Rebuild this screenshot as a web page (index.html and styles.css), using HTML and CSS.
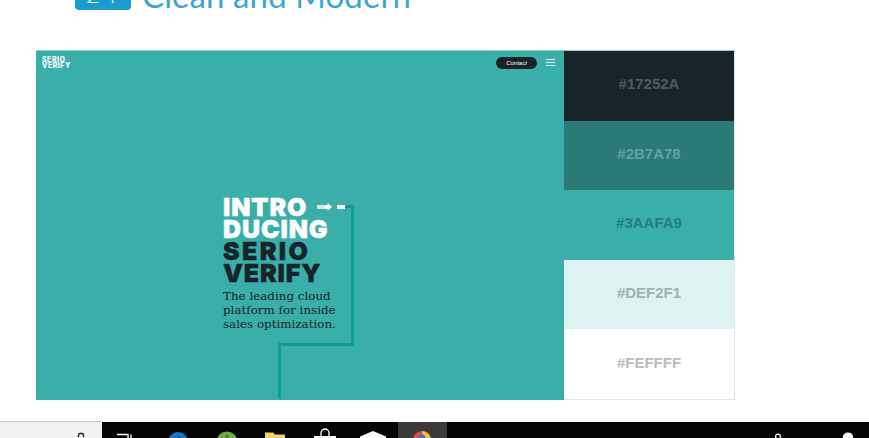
FILE: index.html
```html
<!DOCTYPE html>
<html lang="en">
<head>
  <meta charset="UTF-8">
  <meta name="viewport" content="width=device-width, initial-scale=1">
  <title>Clean and Modern</title>
  <link rel="stylesheet" href="styles.css">
</head>
<body>
<div class="page">
  <h2 class="titulo">
    <span class="badge">24</span>
    <span class="titulo-texto">Clean and Modern</span>
  </h2>

  <div class="figura">
    <div class="hero">
      <div class="hero-top">
        <div class="logo">SERIO<br>VERIFY</div>
        <div class="hero-nav">
          <span class="contact">Contact</span>
          <span class="menu"><i></i><i></i><i></i></span>
        </div>
      </div>
      <div class="hero-body">
        <div class="intro">
          <div class="intro-linha">
            <span class="branco">INTRO</span>
            <svg class="seta" width="30" height="8" viewBox="0 0 30 8">
              <rect x="0" y="2" width="8" height="4" fill="#cfe9e7"/>
              <path d="M8 2h2.500V0L15 4l-4.500 4V6H8z" fill="#fff"/>
              <rect x="20" y="2" width="8" height="4" fill="#fff"/>
            </svg>
          </div>
          <div class="branco">DUCING</div>
          <div class="escuro serio">SERIO</div>
          <div class="escuro">VERIFY</div>
          <p class="sub">The leading cloud<br>platform for inside<br>sales optimization.</p>
        </div>
      </div>
      <svg class="linha" width="82" height="194" viewBox="0 0 82 194">
        <path d="M68 1.500H75.500V139.500H2.500V194" fill="none" stroke="#0f9c96" stroke-width="3"/>
      </svg>
    </div>
    <div class="paleta">
      <div class="cor cor1">#17252A</div>
      <div class="cor cor2">#2B7A78</div>
      <div class="cor cor3">#3AAFA9</div>
      <div class="cor cor4">#DEF2F1</div>
      <div class="cor cor5">#FEFFFF</div>
    </div>
  </div>

  <div class="barra">
    <div class="busca">
      <svg width="8" height="15" viewBox="0 0 8 15">
        <rect x="1.500" y="11.500" width="5" height="8" rx="1.500" fill="none" stroke="#222" stroke-width="1.400"/>
      </svg>
    </div>
    <div class="apps">
      <div class="app">
        <svg width="24" height="16" viewBox="0 0 24 16">
          <path d="M-1 16V12.500H11V16M14 12.500V16" fill="none" stroke="#fff" stroke-width="1.300"/>
        </svg>
      </div>
      <div class="app">
        <svg width="24" height="16" viewBox="0 0 24 16">
          <circle cx="12" cy="20" r="10" fill="#0c78c8"/>
          <circle cx="13" cy="20" r="4.500" fill="#000"/>
        </svg>
      </div>
      <div class="app">
        <svg width="24" height="16" viewBox="0 0 24 16">
          <circle cx="12" cy="20" r="10.500" fill="#76a844"/>
          <circle cx="12" cy="14.500" r="2" fill="#55802f"/>
        </svg>
      </div>
      <div class="app">
        <svg width="24" height="16" viewBox="0 0 24 16">
          <path d="M1 16V10.500H9L11 12.500H21V16z" fill="#f2d16f"/>
        </svg>
      </div>
      <div class="app">
        <svg width="24" height="16" viewBox="0 0 24 16">
          <path d="M8 14V11a4 4 0 0 1 8 0V14" fill="none" stroke="#fff" stroke-width="1.300"/>
          <rect x="1" y="14" width="22" height="2" fill="#fff"/>
        </svg>
      </div>
      <div class="app">
        <svg width="28" height="16" viewBox="0 0 28 16">
          <path d="M13 9L26 14.500V16H0V14.500z" fill="#fff"/>
        </svg>
      </div>
      <div class="app app-ativo">
        <svg width="24" height="16" viewBox="0 0 24 16">
          <path d="M2 16a9 9 0 0 1 9-7V16z" fill="#e8453c"/>
          <path d="M11 9a9 9 0 0 1 9 7H11z" fill="#f6c02c"/>
          <circle cx="11" cy="16" r="3.500" fill="#3d6fd8"/>
        </svg>
      </div>
    </div>
    <div class="bandeja">
      <svg width="10" height="16" viewBox="0 0 10 16">
        <circle cx="5" cy="14.500" r="2.400" fill="none" stroke="#fff" stroke-width="1.200"/>
      </svg>
      <svg width="12" height="16" viewBox="0 0 12 16">
        <path d="M1 16a5 4.500 0 0 1 10-2V16z" fill="#fff"/>
      </svg>
    </div>
  </div>
</div>
</body>
</html>
```

FILE: styles.css
```css
html, body {
  margin: 0;
  padding: 0;
  background: #ffffff;
}
.page {
  height: 438px;
  overflow: hidden;
  display: flex;
  flex-direction: column;
}
.titulo {
  display: flex;
  align-items: flex-end;
  gap: 11px;
  height: 51px;
  margin: -30px 0 29px 0;
  padding-left: 75px;
  font-weight: normal;
  box-sizing: border-box;
}
.badge {
  width: 56px;
  height: 28px;
  margin-bottom: 11px;
  background: #1a9ccf;
  border-radius: 4px;
  color: #ffffff;
  font-family: "Lato", sans-serif;
  font-weight: 300;
  font-size: 24px;
  line-height: 23px;
  text-align: center;
  letter-spacing: 3px;
  overflow: hidden;
}
.titulo-texto {
  color: #3da5d3;
  font-family: "Lato", sans-serif;
  font-weight: 400;
  font-size: 33px;
  line-height: 41px;
  margin-bottom: 5px;
  letter-spacing: 0.1px;
}
.figura {
  display: flex;
  width: 699px;
  height: 349px;
  margin-left: 36px;
  border-top: 1px solid #8fd0cc;
}
.hero {
  position: relative;
  width: 528px;
  background: #3aafa9;
  display: flex;
  flex-direction: column;
}
.hero-top {
  display: flex;
  justify-content: space-between;
  padding: 5px 9px 0 6px;
}
.logo {
  margin-top: 1px;
  color: #ffffff;
  font-family: "Inter", sans-serif;
  font-weight: 800;
  font-size: 7px;
  line-height: 6px;
  letter-spacing: 0.500px;
}
.hero-nav {
  display: flex;
  align-items: center;
  gap: 9px;
}
.contact {
  width: 41px;
  height: 12px;
  border-radius: 6px;
  background: #17252a;
  color: #ffffff;
  font-family: "Liberation Sans", sans-serif;
  font-style: italic;
  font-size: 6px;
  line-height: 12px;
  text-align: center;
}
.menu {
  display: flex;
  flex-direction: column;
  gap: 2px;
  width: 9px;
}
.menu i {
  height: 1px;
  background: #e4f5f4;
}
.hero-body {
  padding: 127px 0 0 187px;
}
.intro {
  font-family: "Inter", sans-serif;
  font-weight: 900;
  font-size: 25px;
  line-height: 22px;
  letter-spacing: 0.9px;
  -webkit-text-stroke: 0.4px currentColor;
}
.intro-linha {
  display: flex;
  align-items: center;
  gap: 10px;
}
.branco {
  color: #ffffff;
}
.escuro {
  color: #17252a;
}
.serio {
  letter-spacing: 2.400px;
}
.seta {
  flex: none;
}
.sub {
  margin: 5px 0 0 0;
  color: #17252a;
  font-family: "DejaVu Serif", serif;
  font-weight: normal;
  font-size: 11.900px;
  line-height: 14px;
  letter-spacing: 0;
  -webkit-text-stroke: 0;
}
.linha {
  position: absolute;
  left: 241px;
  top: 154px;
}
.paleta {
  width: 170px;
  height: 348px;
  display: flex;
  flex-direction: column;
  border-right: 1px solid #e6e6e6;
  border-bottom: 1px solid #e6e6e6;
  box-sizing: content-box;
}
.cor {
  flex: 1;
  display: flex;
  align-items: center;
  justify-content: center;
  padding-bottom: 4px;
  font-family: "Liberation Sans", sans-serif;
  font-weight: bold;
  font-size: 15px;
}
.cor1 { background: #17252a; color: #4b5a5f; }
.cor2 { background: #2b7a78; color: #61a3a0; }
.cor3 { background: #3aafa9; color: #1f7f80; }
.cor4 { background: #def2f1; color: #a1b1b1; }
.cor5 { background: #feffff; color: #bcbcbc; }
.barra {
  display: flex;
  height: 16px;
  margin-top: 22px;
  background: #050505;
}
.busca {
  width: 102px;
  box-sizing: border-box;
  margin-top: -1px;
  height: 17px;
  padding-left: 77px;
  background: #f2f2f2;
  border-top: 1px solid #c4c4c4;
}
.busca svg {
  display: block;
}
.apps {
  display: flex;
  padding-left: 2px;
}
.app {
  width: 49px;
  height: 16px;
  display: flex;
  justify-content: center;
}
.app-ativo {
  background: #3a3a3a;
}
.bandeja {
  flex: 1;
  display: flex;
  justify-content: flex-end;
  gap: 59px;
  padding-right: 15px;
}
```
